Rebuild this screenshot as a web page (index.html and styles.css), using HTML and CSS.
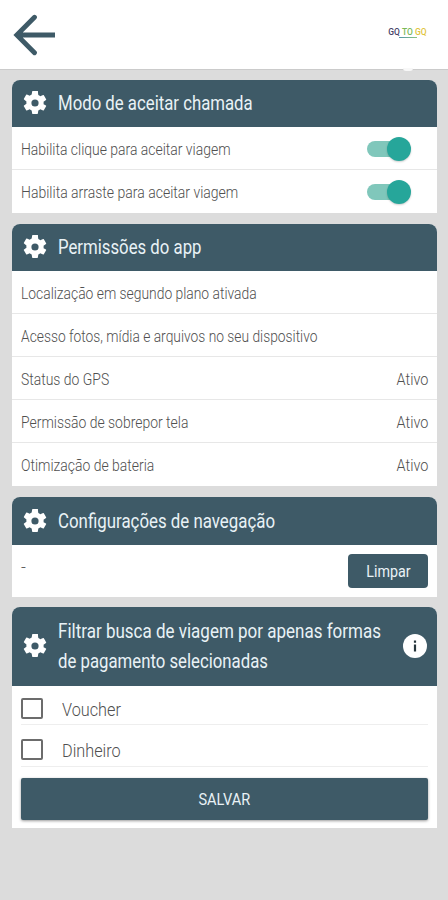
FILE: index.html
```html
<!DOCTYPE html>
<html lang="pt-BR">
<head>
<meta charset="utf-8">
<title>Configurações</title>
<link rel="stylesheet" href="styles.css">
</head>
<body>
<svg class="defs" aria-hidden="true"><symbol id="gear" viewBox="2 2 20 20"><path d="M19.14 12.94c.04-.3.06-.61.06-.94s-.02-.64-.07-.94l2.03-1.58a.49.49 0 0 0 .12-.61l-1.92-3.32a.49.49 0 0 0-.59-.22l-2.39.96a7 7 0 0 0-1.62-.94l-.36-2.54A.48.48 0 0 0 13.92 2h-3.84c-.24 0-.43.17-.47.41l-.36 2.54c-.59.24-1.13.57-1.62.94l-2.39-.96a.49.49 0 0 0-.59.22L2.74 8.47c-.12.21-.08.47.12.61l2.03 1.58c-.05.3-.09.63-.09.94s.02.64.07.94l-2.03 1.58a.49.49 0 0 0-.12.61l1.92 3.32c.12.22.37.29.59.22l2.39-.96c.5.38 1.03.7 1.62.94l.36 2.54c.05.24.24.41.48.41h3.84c.24 0 .44-.17.47-.41l.36-2.54c.59-.24 1.13-.56 1.62-.94l2.39.96c.22.08.47 0 .59-.22l1.92-3.32a.49.49 0 0 0-.12-.61zM12 15a3 3 0 1 1 0-6 3 3 0 0 1 0 6z"/></symbol></svg>
<header class="topbar">
  <svg class="back" viewBox="0 0 44 42"><path d="M42 21H5"/><path class="head" d="M21.500 3.200L3.800 21l17.700 17.800"/><path class="tip" d="M2.500 21L10 13.500v15z"/></svg>
  <div class="logo"><div><b class="navy">GQ</b> <b class="green">TO</b> <b class="gold">GQ</b></div><i class="line"></i></div>
  <i class="notch"></i>
</header>
<main>
  <section class="card">
    <h2><svg class="gear"><use href="#gear"/></svg><span class="t t1">Modo de aceitar chamada</span></h2>
    <div class="row first"><span class="t t2">Habilita clique para aceitar viagem</span><i class="switch"></i></div>
    <div class="row"><span class="t t3">Habilita arraste para aceitar viagem</span><i class="switch"></i></div>
  </section>
  <section class="card">
    <h2><svg class="gear"><use href="#gear"/></svg><span class="t t4">Permissões do app</span></h2>
    <div class="row"><span class="t t5">Localização em segundo plano ativada</span></div>
    <div class="row"><span class="t t6">Acesso fotos, mídia e arquivos no seu dispositivo</span></div>
    <div class="row"><span class="t t7">Status do GPS</span><span class="t value">Ativo</span></div>
    <div class="row"><span class="t t8">Permissão de sobrepor tela</span><span class="t value">Ativo</span></div>
    <div class="row"><span class="t t9">Otimização de bateria</span><span class="t value">Ativo</span></div>
  </section>
  <section class="card">
    <h2 class="mid"><svg class="gear"><use href="#gear"/></svg><span class="t t10">Configurações de navegação</span></h2>
    <div class="row nav"><span class="dash">-</span><button class="clear"><span class="t t11">Limpar</span></button></div>
  </section>
  <section class="card">
    <h2 class="tall"><svg class="gear"><use href="#gear"/></svg><span class="lines"><span class="t t12">Filtrar busca de viagem por apenas formas</span><span class="t t13">de pagamento selecionadas</span></span><svg class="info" viewBox="0 0 24 24"><circle cx="12" cy="12" r="12"/><path d="M10.900 6.500h2.200v2.200h-2.200zM10.900 10.500h2.200v7h-2.200z"/></svg></h2>
    <div class="options">
      <label class="option"><i class="box"></i><span class="t t14">Voucher</span></label>
      <label class="option"><i class="box"></i><span class="t t15">Dinheiro</span></label>
      <button class="save"><span class="t t16">SALVAR</span></button>
    </div>
  </section>
</main>
</body>
</html>
```
FILE: styles.css
```css
* { box-sizing: border-box; }
body { margin: 0; min-height: 900px; background: #dcdcdc; font-family: Roboto, "Liberation Sans", sans-serif; color: #505050; }
.defs { position: absolute; width: 0; height: 0; }
.topbar { position: relative; height: 70px; background: #fff; border-bottom: 1px solid #cbcbcb; display: flex; align-items: flex-start; justify-content: space-between; padding: 14px 21px 0 13px; }
.notch { position: absolute; right: 35px; bottom: -2px; width: 10px; height: 3px; border-radius: 0 0 5px 5px; background: #f8f8f8; }
.back { width: 44px; height: 42px; fill: none; stroke: #3e5a67; stroke-width: 4.800; }
.head { stroke-linecap: round; }
.tip { fill: #3e5a67; stroke: none; }
.logo { width: 39px; padding-top: 13px; font-size: 9px; line-height: 11px; white-space: nowrap; display: flex; flex-direction: column; align-items: center; }
.logo b { font-weight: 500; }
.logo div { transform: scaleX(.94); }
.navy { color: #454267; }
.green { color: #79b957; }
.gold { color: #dfc43c; }
.line { width: 18px; height: 1px; background: linear-gradient(90deg, #5292a8, #8cc57e); margin-top: -1px; }
main { padding: 9.500px 11px 0 12px; display: flex; flex-direction: column; gap: 10.500px; }
.card { background: #fff; border-radius: 8px 8px 0 0; overflow: hidden; }
h2 { margin: 0; height: 47.500px; background: #3e5a67; color: #e9f2f6; display: flex; align-items: center; padding: 0 10px 0 11px; font-size: 20px; font-weight: 400; line-height: 30px; }
h2.mid { height: 48.500px; }
h2.tall { height: 78.500px; }
.gear { width: 24px; height: 24px; fill: #fff; margin-right: 11px; flex: none; }
.lines { flex: 1; min-width: 0; display: flex; flex-direction: column; align-items: flex-start; }
.info { width: 24px; height: 24px; flex: none; fill: #fff; }
.info path { fill: #26343b; }
.t { display: inline-block; white-space: nowrap; transform-origin: left center; flex: none; }
.row { height: 43px; display: flex; align-items: center; justify-content: space-between; padding: 1px 9px 0; font-size: 17px; font-weight: 300; border-bottom: 1px solid #e7e7e7; }
.row:last-child { border-bottom: 0; }
.value { transform-origin: right center; transform: scaleX(.85); }
.switch { width: 42px; height: 16px; border-radius: 8px; background: #80c7bb; margin-right: 19px; display: flex; align-items: center; justify-content: flex-end; }
.switch::after { content: ""; width: 24px; height: 24px; border-radius: 50%; background: #26a69a; box-shadow: 0 1px 2px #0003; margin-right: -2px; flex: none; }
.nav { height: 51.500px; padding-top: 0; }
.dash { padding-bottom: 7px; }
button { border: 0; margin: 0; padding: 0; font-family: inherit; background: #3e5a67; color: #e9f2f6; display: flex; align-items: center; justify-content: center; }
.t11, .t16 { transform-origin: center; }
.clear { width: 80px; height: 34px; border-radius: 4px; font-size: 17px; }
.options { padding: 0 9px 8px; }
.option { display: flex; align-items: center; height: 42px; font-size: 19px; font-weight: 300; border-bottom: 1px solid #eee; padding-top: 9px; }
.option:first-child { height: 39px; padding-top: 8px; }
.option .t { padding-top: 1px; }
.box { width: 21.500px; height: 21.500px; border: 2px solid #6c6c6c; border-radius: 2px; margin-right: 19.500px; }
.save { width: 100%; height: 42px; margin-top: 11px; border-radius: 2px; font-size: 17px; box-shadow: 0 1px 3px #0006; }
.t1, .t4, .t13 { transform: scaleX(.838); }
.t10 { transform: scaleX(.843); }
.t12 { transform: scaleX(.85); }
.t2, .t7, .t8, .t9 { transform: scaleX(.82); }
.t3 { transform: scaleX(.824); }
.t5 { transform: scaleX(.815); }
.t6 { transform: scaleX(.812); }
.t11 { transform: scaleX(.84); }
.t14, .t15, .t16 { transform: scaleX(.855); }
```
